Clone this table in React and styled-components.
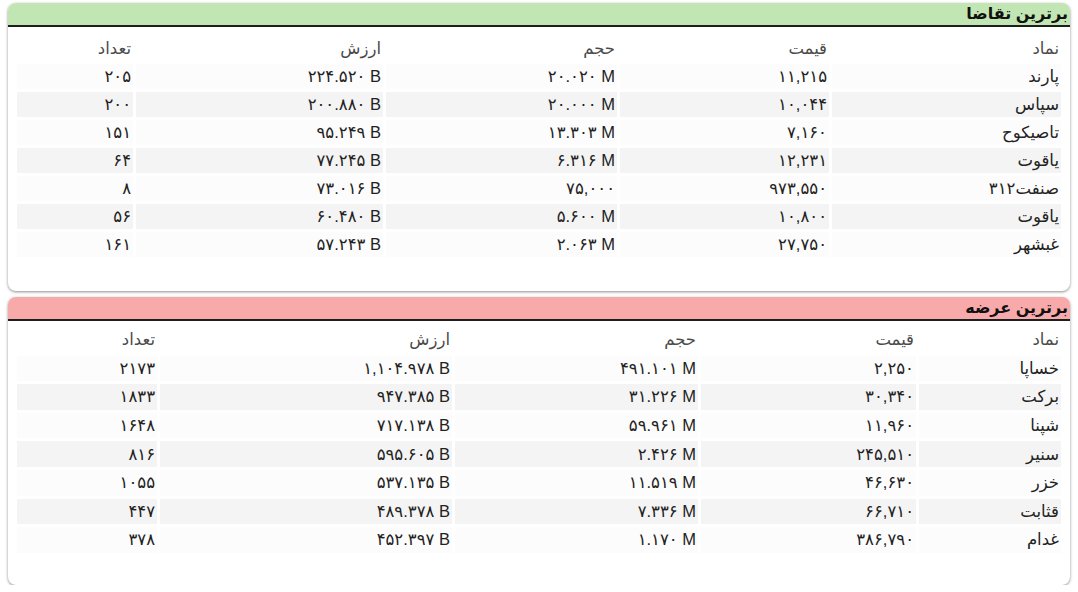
import React from 'react';
import styled, { createGlobalStyle } from 'styled-components';

const GlobalStyle = createGlobalStyle`
  html, body {
    margin: 0;
    padding: 0;
    background: #ffffff;
  }
  body {
    font-family: "Liberation Sans", "DejaVu Sans", sans-serif;
  }
`;

const demand = {
  title: 'برترین تقاضا',
  color: '#c2e6b3',
  widths: [229, 209, 231, 247, 116],
  rowHeight: 25,
  headTop: 6,
  rows: [
    ['پارند', '۱۱,۲۱۵', '۲۰.۰۲۰ M', '۲۲۴.۵۲۰ B', '۲۰۵'],
    ['سپاس', '۱۰,۰۴۴', '۲۰.۰۰۰ M', '۲۰۰.۸۸۰ B', '۲۰۰'],
    ['تاصیکوح', '۷,۱۶۰', '۱۳.۳۰۳ M', '۹۵.۲۴۹ B', '۱۵۱'],
    ['یاقوت', '۱۲,۲۳۱', '۶.۳۱۶ M', '۷۷.۲۴۵ B', '۶۴'],
    ['صنفت۳۱۲', '۹۷۳,۵۵۰', '۷۵,۰۰۰', '۷۳.۰۱۶ B', '۸'],
    ['یاقوت', '۱۰,۸۰۰', '۵.۶۰۰ M', '۶۰.۴۸۰ B', '۵۶'],
    ['غبشهر', '۲۷,۷۵۰', '۲.۰۶۳ M', '۵۷.۲۴۳ B', '۱۶۱'],
  ],
};

const supply = {
  title: 'برترین عرضه',
  color: '#f8a9a9',
  widths: [142, 215, 243, 292, 140],
  rowHeight: 25.6,
  headTop: 3,
  rows: [
    ['خساپا', '۲,۲۵۰', '۴۹۱.۱۰۱ M', '۱,۱۰۴.۹۷۸ B', '۲۱۷۳'],
    ['برکت', '۳۰,۳۴۰', '۳۱.۲۲۶ M', '۹۴۷.۳۸۵ B', '۱۸۳۳'],
    ['شپنا', '۱۱,۹۶۰', '۵۹.۹۶۱ M', '۷۱۷.۱۳۸ B', '۱۶۴۸'],
    ['سنیر', '۲۴۵,۵۱۰', '۲.۴۲۶ M', '۵۹۵.۶۰۵ B', '۸۱۶'],
    ['خزر', '۴۶,۶۳۰', '۱۱.۵۱۹ M', '۵۳۷.۱۳۵ B', '۱۰۵۵'],
    ['قثابت', '۶۶,۷۱۰', '۷.۳۳۶ M', '۴۸۹.۳۷۸ B', '۴۴۷'],
    ['غدام', '۳۸۶,۷۹۰', '۱.۱۷۰ M', '۴۵۲.۳۹۷ B', '۳۷۸'],
  ],
};

const columns = ['نماد', 'قیمت', 'حجم', 'ارزش', 'تعداد'];

function MarketTable({ data }) {
  return (
    <Card>
      <CardHeader $bg={data.color}>
        <Title>{data.title}</Title>
      </CardHeader>
      <Table $top={data.headTop}>
        <colgroup>
          {data.widths.map((w, i) => (
            <col key={i} style={{ width: w }} />
          ))}
        </colgroup>
        <thead>
          <tr>
            {columns.map((c) => (
              <HeadCell key={c} $h={data.rowHeight}>{c}</HeadCell>
            ))}
          </tr>
        </thead>
        <tbody>
          {data.rows.map((row, i) => (
            <Row key={i} $odd={i % 2 === 1}>
              {row.map((v, j) => (
                <Cell key={j} $h={data.rowHeight}>
                  {j === 0 ? v : <Num dir="ltr">{v}</Num>}
                </Cell>
              ))}
            </Row>
          ))}
        </tbody>
      </Table>
    </Card>
  );
}

export default function App() {
  return (
    <>
      <GlobalStyle />
      <Page dir="rtl">
        <MarketTable data={demand} />
        <MarketTable data={supply} />
      </Page>
    </>
  );
}

const Page = styled.div`
  display: flex;
  flex-direction: column;
  gap: 6px;
  padding: 3px 8px 0 8px;
  width: 1062px;
`;

const Card = styled.div`
  height: 288px;
  background: #ffffff;
  border-radius: 8px;
  box-shadow: 0 1px 3px rgba(0, 0, 0, 0.45);
  overflow: hidden;
`;

const CardHeader = styled.div`
  height: 22px;
  background: ${(p) => p.$bg};
  border-bottom: 2px solid #1e1e1e;
  display: flex;
  align-items: flex-end;
  padding: 0 2px;
`;

const Title = styled.span`
  font-size: 16px;
  font-weight: bold;
  color: #111;
  line-height: 22px;
`;

const Table = styled.table`
  table-layout: fixed;
  width: 1050px;
  margin: ${(p) => p.$top}px 6px 0 6px;
  border-collapse: separate;
  border-spacing: 3px;
  font-size: 16.5px;
`;

const HeadCell = styled.th`
  height: ${(p) => p.$h}px;
  padding: 0 2px;
  text-align: right;
  font-weight: normal;
  color: #4a4a4a;
`;

const Row = styled.tr`
  background: ${(p) => (p.$odd ? '#f4f4f4' : '#fcfcfc')};
`;

const Cell = styled.td`
  height: ${(p) => p.$h}px;
  padding: 0 2px;
  text-align: right;
  color: #222;
  white-space: nowrap;
`;

const Num = styled.span`
  unicode-bidi: isolate;
`;
